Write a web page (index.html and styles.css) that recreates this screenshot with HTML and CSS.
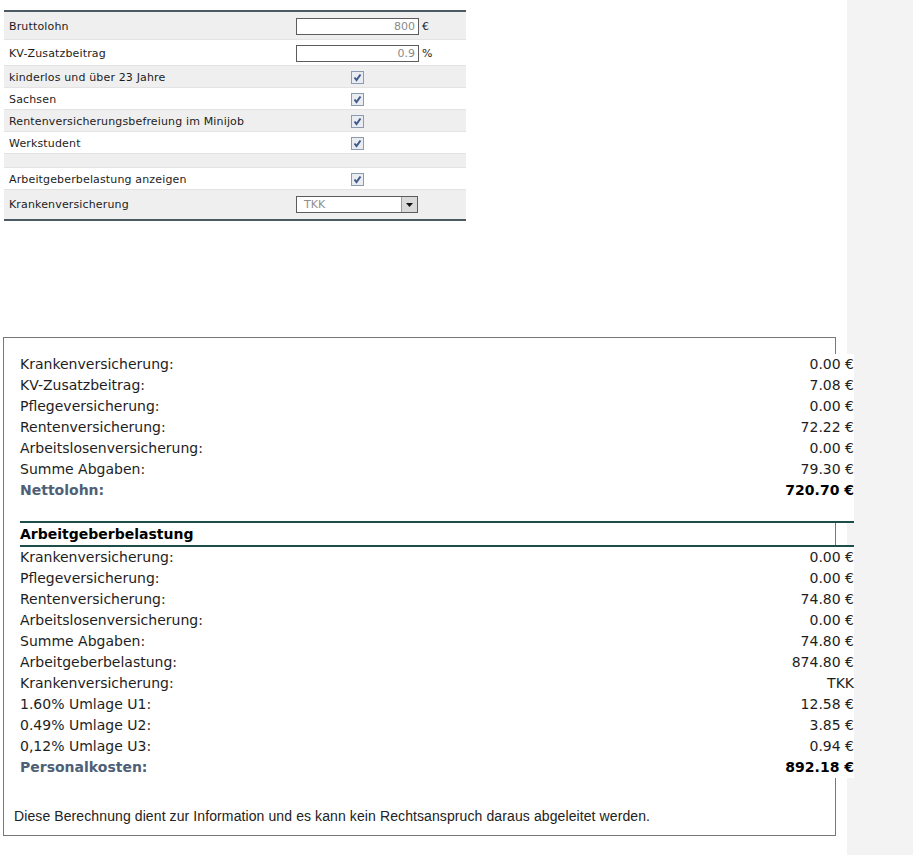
FILE: index.html
```html
<!DOCTYPE html>
<html lang="de">
<head>
    <meta charset="UTF-8">
    <title>Brutto-Netto-Rechner Minijob</title>
    <link rel="stylesheet" href="styles.css">
</head>
<body>
    <div class="page">
        <table class="form">
            <tr class="row-input alt">
                <td class="label">Bruttolohn</td>
                <td class="field"><input type="text" value="800" readonly></td>
                <td class="unit">&euro;</td>
            </tr>
            <tr class="row-input2">
                <td class="label">KV-Zusatzbeitrag</td>
                <td class="field"><input type="text" value="0.9" readonly></td>
                <td class="unit">%</td>
            </tr>
            <tr class="row-check alt">
                <td class="label">kinderlos und über 23 Jahre</td>
                <td class="field center"><span class="check"><svg width="13" height="13" viewBox="0 0 13 13"><rect x="0.5" y="0.5" width="12" height="12" fill="#e9ecf1" stroke="#8d9bb0"/><path d="M3.5 6.5 L5.5 9 L9.5 3.5" fill="none" stroke="#3f5a8a" stroke-width="2"/></svg></span></td>
                <td class="unit"></td>
            </tr>
            <tr class="row-check">
                <td class="label">Sachsen</td>
                <td class="field center"><span class="check"><svg width="13" height="13" viewBox="0 0 13 13"><rect x="0.5" y="0.5" width="12" height="12" fill="#e9ecf1" stroke="#8d9bb0"/><path d="M3.5 6.5 L5.5 9 L9.5 3.5" fill="none" stroke="#3f5a8a" stroke-width="2"/></svg></span></td>
                <td class="unit"></td>
            </tr>
            <tr class="row-check alt">
                <td class="label">Rentenversicherungsbefreiung im Minijob</td>
                <td class="field center"><span class="check"><svg width="13" height="13" viewBox="0 0 13 13"><rect x="0.5" y="0.5" width="12" height="12" fill="#e9ecf1" stroke="#8d9bb0"/><path d="M3.5 6.5 L5.5 9 L9.5 3.5" fill="none" stroke="#3f5a8a" stroke-width="2"/></svg></span></td>
                <td class="unit"></td>
            </tr>
            <tr class="row-check">
                <td class="label">Werkstudent</td>
                <td class="field center"><span class="check"><svg width="13" height="13" viewBox="0 0 13 13"><rect x="0.5" y="0.5" width="12" height="12" fill="#e9ecf1" stroke="#8d9bb0"/><path d="M3.5 6.5 L5.5 9 L9.5 3.5" fill="none" stroke="#3f5a8a" stroke-width="2"/></svg></span></td>
                <td class="unit"></td>
            </tr>
            <tr class="row-empty alt">
                <td class="label"></td>
                <td class="field"></td>
                <td class="unit"></td>
            </tr>
            <tr class="row-check">
                <td class="label">Arbeitgeberbelastung anzeigen</td>
                <td class="field center"><span class="check"><svg width="13" height="13" viewBox="0 0 13 13"><rect x="0.5" y="0.5" width="12" height="12" fill="#e9ecf1" stroke="#8d9bb0"/><path d="M3.5 6.5 L5.5 9 L9.5 3.5" fill="none" stroke="#3f5a8a" stroke-width="2"/></svg></span></td>
                <td class="unit"></td>
            </tr>
            <tr class="row-select alt last">
                <td class="label">Krankenversicherung</td>
                <td class="field">
                    <div class="select">
                        <span class="select-text">TKK</span>
                        <span class="select-btn"><svg width="7" height="4" viewBox="0 0 7 4"><path d="M0 0 H7 L3.5 4 Z" fill="#111"/></svg></span>
                    </div>
                </td>
                <td class="unit"></td>
            </tr>
        </table>

        <div class="results">
            <table class="res">
                <tr><td>Krankenversicherung:</td><td class="val">0.00 &euro;</td></tr>
                <tr><td>KV-Zusatzbeitrag:</td><td class="val">7.08 &euro;</td></tr>
                <tr><td>Pflegeversicherung:</td><td class="val">0.00 &euro;</td></tr>
                <tr><td>Rentenversicherung:</td><td class="val">72.22 &euro;</td></tr>
                <tr><td>Arbeitslosenversicherung:</td><td class="val">0.00 &euro;</td></tr>
                <tr><td>Summe Abgaben:</td><td class="val">79.30 &euro;</td></tr>
                <tr class="total"><td>Nettolohn:</td><td class="val">720.70 &euro;</td></tr>
                <tr class="spacer"><td colspan="2"></td></tr>
            </table>

            <table class="res employer">
                <tr class="head"><th colspan="2">Arbeitgeberbelastung</th></tr>
                <tr><td>Krankenversicherung:</td><td class="val">0.00 &euro;</td></tr>
                <tr><td>Pflegeversicherung:</td><td class="val">0.00 &euro;</td></tr>
                <tr><td>Rentenversicherung:</td><td class="val">74.80 &euro;</td></tr>
                <tr><td>Arbeitslosenversicherung:</td><td class="val">0.00 &euro;</td></tr>
                <tr><td>Summe Abgaben:</td><td class="val">74.80 &euro;</td></tr>
                <tr><td>Arbeitgeberbelastung:</td><td class="val">874.80 &euro;</td></tr>
                <tr><td>Krankenversicherung:</td><td class="val">TKK</td></tr>
                <tr><td>1.60% Umlage U1:</td><td class="val">12.58 &euro;</td></tr>
                <tr><td>0.49% Umlage U2:</td><td class="val">3.85 &euro;</td></tr>
                <tr><td>0,12% Umlage U3:</td><td class="val">0.94 &euro;</td></tr>
                <tr class="total"><td>Personalkosten:</td><td class="val">892.18 &euro;</td></tr>
            </table>

            <p class="note">Diese Berechnung dient zur Information und es kann kein Rechtsanspruch daraus abgeleitet werden.</p>
        </div>
    </div>
</body>
</html>
```

FILE: styles.css
```css
html {
    background: #f3f3f3;
}
body {
    margin: 0;
    padding: 0;
}
.page {
    width: 847px;
    min-height: 855px;
    background: #fff;
    padding: 10px 0 0 3px;
    box-sizing: border-box;
}
.form {
    margin-left: 1px;
    width: 462px;
    border-collapse: separate;
    border-spacing: 0;
    border-top: 2px solid #4b5a62;
    border-bottom: 2px solid #4b5a62;
    font-family: 'DejaVu Sans', Verdana, sans-serif;
    font-size: 11px;
    color: #1c1c1c;
}
.form td {
    padding: 0;
    border-bottom: 1px solid #e3e3e3;
    vertical-align: middle;
}
.form tr.last td {
    border-bottom: none;
}
.form tr.alt td {
    background: #efefef;
}
.form .label {
    width: 287px;
    padding-left: 5px;
    letter-spacing: 0.15px;
}
.form .field {
    width: 122px;
}
.form .center {
    text-align: center;
}
.form .unit {
    padding-left: 3px;
}
.row-input td,
.row-input2 td {
    padding-top: 2px;
}
.row-input td {
    height: 25px;
}
.row-input2 td {
    height: 23px;
}
.row-check td {
    height: 20px;
    padding-top: 1px;
}
.row-empty td {
    height: 13px;
}
.row-select td {
    height: 29px;
}
.form input {
    display: block;
    width: 123px;
    height: 17px;
    box-sizing: border-box;
    border: 1px solid #5c5c5c;
    padding: 0 3px 0 0;
    margin: 0;
    text-align: right;
    font-family: 'DejaVu Sans', Verdana, sans-serif;
    font-size: 11px;
    color: #8a8a8a;
    background: #fff;
    outline: none;
}
.check {
    display: inline-block;
    width: 13px;
    height: 13px;
    vertical-align: middle;
}
.check svg {
    display: block;
}
.select {
    display: flex;
    align-items: center;
    width: 122px;
    height: 17px;
    box-sizing: border-box;
    border: 1px solid #5c5c5c;
    background: #fff;
}
.select-text {
    flex: 1;
    padding-left: 7px;
    color: #8f8f8f;
}
.select-btn {
    display: flex;
    align-items: center;
    justify-content: center;
    width: 15px;
    height: 15px;
    background: #d9d9d9;
    border-left: 1px solid #9a9a9a;
}
.results {
    margin-top: 116px;
    width: 831px;
    border: 1px solid #777;
    padding: 16px 0 11px 0;
    font-family: 'DejaVu Sans', Verdana, sans-serif;
    font-size: 14px;
    color: #1e1e1e;
}
.res {
    margin-left: 16px;
    width: 834px;
    border-collapse: collapse;
    background: #fff;
}
.res td {
    height: 21px;
    padding: 0;
    line-height: 21px;
    white-space: nowrap;
}
.res tr.spacer td {
    height: 20px;
}
.res .val {
    text-align: right;
}
.res tr.total td {
    font-weight: bold;
    color: #000;
}
.res tr.total td:first-child {
    color: #4e5f76;
}
.employer {
    background: transparent;
}
.employer td {
    background: #fff;
}
.employer th {
    height: 22px;
    padding: 0;
    text-align: left;
    font-weight: bold;
    color: #000;
    border-top: 2px solid #1d4d4a;
    border-bottom: 2px solid #1d4d4a;
}
.note {
    margin: 30px 0 0 10px;
    font-family: 'Liberation Sans', Arial, sans-serif;
    font-size: 14px;
    line-height: 16px;
    letter-spacing: 0.1px;
    color: #222;
}
```
